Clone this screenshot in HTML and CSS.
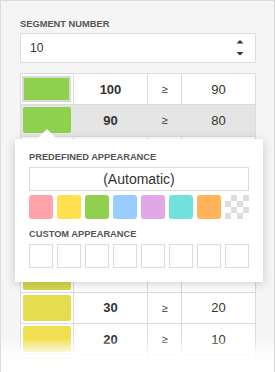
FILE: index.html
```html
<!DOCTYPE html>
<html lang="en">
<head>
    <meta charset="UTF-8">
    <meta name="viewport" content="width=device-width, initial-scale=1.0">
    <title>Segment Settings</title>
    <link rel="stylesheet" href="styles.css">
</head>
<body>
    <div class="panel">
        <div class="caption">Segment number</div>
        <div class="spin">
            <span class="spin-value">10</span>
            <svg class="spin-arrows" width="8" height="18" viewBox="0 0 8 18">
                <path d="M0.5 4.5 L4 1 L7.5 4.5 Z" fill="#333"/>
                <path d="M0.5 13 L4 16.5 L7.5 13 Z" fill="#333"/>
            </svg>
        </div>

        <div class="segments">
            <div class="seg-row">
                <div class="cell"><span class="swatch swatch-framed" style="background-color:#8fd14f"></span></div>
                <div class="cell value">100</div>
                <div class="cell sign">&ge;</div>
                <div class="cell limit">90</div>
            </div>
            <div class="seg-row active">
                <div class="cell"><span class="swatch" style="background-color:#8fd14f"></span></div>
                <div class="cell value">90</div>
                <div class="cell sign">&ge;</div>
                <div class="cell limit">80</div>
            </div>
            <div class="seg-row">
                <div class="cell"><span class="swatch" style="background-color:#9dd34f"></span></div>
                <div class="cell value">80</div>
                <div class="cell sign">&ge;</div>
                <div class="cell limit">70</div>
            </div>
            <div class="seg-row">
                <div class="cell"><span class="swatch" style="background-color:#abd54f"></span></div>
                <div class="cell value">70</div>
                <div class="cell sign">&ge;</div>
                <div class="cell limit">60</div>
            </div>
            <div class="seg-row">
                <div class="cell"><span class="swatch" style="background-color:#b9d74f"></span></div>
                <div class="cell value">60</div>
                <div class="cell sign">&ge;</div>
                <div class="cell limit">50</div>
            </div>
            <div class="seg-row">
                <div class="cell"><span class="swatch" style="background-color:#c7d94f"></span></div>
                <div class="cell value">50</div>
                <div class="cell sign">&ge;</div>
                <div class="cell limit">40</div>
            </div>
            <div class="seg-row">
                <div class="cell"><span class="swatch" style="background-color:#d5db4f"></span></div>
                <div class="cell value">40</div>
                <div class="cell sign">&ge;</div>
                <div class="cell limit">30</div>
            </div>
            <div class="seg-row">
                <div class="cell"><span class="swatch" style="background-color:#e3dd4f"></span></div>
                <div class="cell value">30</div>
                <div class="cell sign">&ge;</div>
                <div class="cell limit">20</div>
            </div>
            <div class="seg-row">
                <div class="cell"><span class="swatch" style="background-color:#f1df4f"></span></div>
                <div class="cell value">20</div>
                <div class="cell sign">&ge;</div>
                <div class="cell limit">10</div>
            </div>
            <div class="seg-row">
                <div class="cell"><span class="swatch" style="background-color:#ffe150"></span></div>
                <div class="cell value">10</div>
                <div class="cell sign">&ge;</div>
                <div class="cell limit">0</div>
            </div>
        </div>

        <div class="popup">
            <div class="caret"></div>
            <div class="caption">Predefined appearance</div>
            <div class="combo">(Automatic)</div>
            <div class="presets">
                <span class="preset" style="background-color:#ffa3aa"></span>
                <span class="preset" style="background-color:#ffe04f"></span>
                <span class="preset" style="background-color:#8fd14f"></span>
                <span class="preset" style="background-color:#99cdff"></span>
                <span class="preset" style="background-color:#e0a8e6"></span>
                <span class="preset" style="background-color:#72e0dc"></span>
                <span class="preset" style="background-color:#ffb45a"></span>
                <span class="preset checker"></span>
            </div>
            <div class="caption">Custom appearance</div>
            <div class="presets">
                <span class="custom"></span>
                <span class="custom"></span>
                <span class="custom"></span>
                <span class="custom"></span>
                <span class="custom"></span>
                <span class="custom"></span>
                <span class="custom"></span>
                <span class="custom"></span>
            </div>
        </div>

        <div class="fade"></div>
    </div>
</body>
</html>
```

FILE: styles.css
```css
* {
    box-sizing: border-box;
}

body {
    margin: 0;
    font-family: 'Liberation Sans', Arial, sans-serif;
    color: #333;
    background-color: #fff;
    overflow: hidden;
}

.panel {
    position: relative;
    width: 275px;
    height: 372px;
    padding: 17px 18px 0 19px;
    background-color: #f5f5f5;
    border: 1px solid #dcdcdc;
    border-bottom: none;
    overflow: hidden;
}

.caption {
    font-size: 9.3px;
    font-weight: bold;
    line-height: 12px;
    text-transform: uppercase;
    color: #555;
}

.spin {
    display: flex;
    align-items: center;
    justify-content: space-between;
    height: 30px;
    margin-top: 3px;
    padding: 0 11px 0 9px;
    background-color: #fff;
    border: 1px solid #dcdcdc;
}

.spin-value {
    font-size: 12px;
}

.spin-arrows {
    display: block;
}

.segments {
    margin-top: 10px;
    background-color: #fff;
    border: 1px solid #dcdcdc;
    border-bottom: none;
}

.seg-row {
    display: grid;
    grid-template-columns: 52px 74px 34px 74px;
    height: 31.25px;
    border-bottom: 1px solid #dcdcdc;
}

.cell {
    display: flex;
    align-items: center;
    justify-content: center;
    border-left: 1px solid #dcdcdc;
    font-size: 13px;
}

.cell:first-child {
    justify-content: flex-start;
    padding-left: 2px;
    border-left: none;
}

.seg-row.active {
    background-color: #e5e5e5;
}

.seg-row.active .cell {
    border-left-color: transparent;
}

.value {
    font-weight: bold;
}

.sign {
    font-size: 11px;
}

.swatch {
    display: block;
    width: 48px;
    height: 26px;
    border-radius: 2px;
}

.swatch-framed {
    width: 49px;
    margin-left: -1px;
    border: 2px solid #d9d9d9;
    border-radius: 0;
}

.popup {
    position: absolute;
    left: 14px;
    top: 138px;
    width: 248px;
    padding: 12px 14px 14px;
    background-color: #fff;
    box-shadow: 0 2px 10px rgba(0, 0, 0, 0.18);
}

.caret {
    position: absolute;
    left: 22px;
    top: -10px;
    width: 0;
    height: 0;
    border-left: 10px solid transparent;
    border-right: 10px solid transparent;
    border-bottom: 10px solid #fff;
}

.combo {
    height: 24px;
    margin: 4px 0;
    border: 1px solid #dcdcdc;
    font-size: 14px;
    line-height: 22px;
    text-align: center;
}

.presets {
    display: flex;
    gap: 4px;
    margin-bottom: 9px;
}

.presets:last-child {
    margin-top: 4px;
    margin-bottom: 0;
}

.preset,
.custom {
    width: 24px;
    height: 24px;
}

.preset {
    border-radius: 3px;
}

.checker {
    border-radius: 0;
    background: repeating-conic-gradient(#dedede 0 25%, #fff 0 50%) 0 0 / 12px 12px;
}

.custom {
    border: 1px solid #dcdcdc;
}

.fade {
    position: absolute;
    left: 0;
    right: 0;
    bottom: 0;
    height: 34px;
    background: linear-gradient(rgba(255, 255, 255, 0), rgba(255, 255, 255, 0.85) 45%, #fff 70%);
}
```
